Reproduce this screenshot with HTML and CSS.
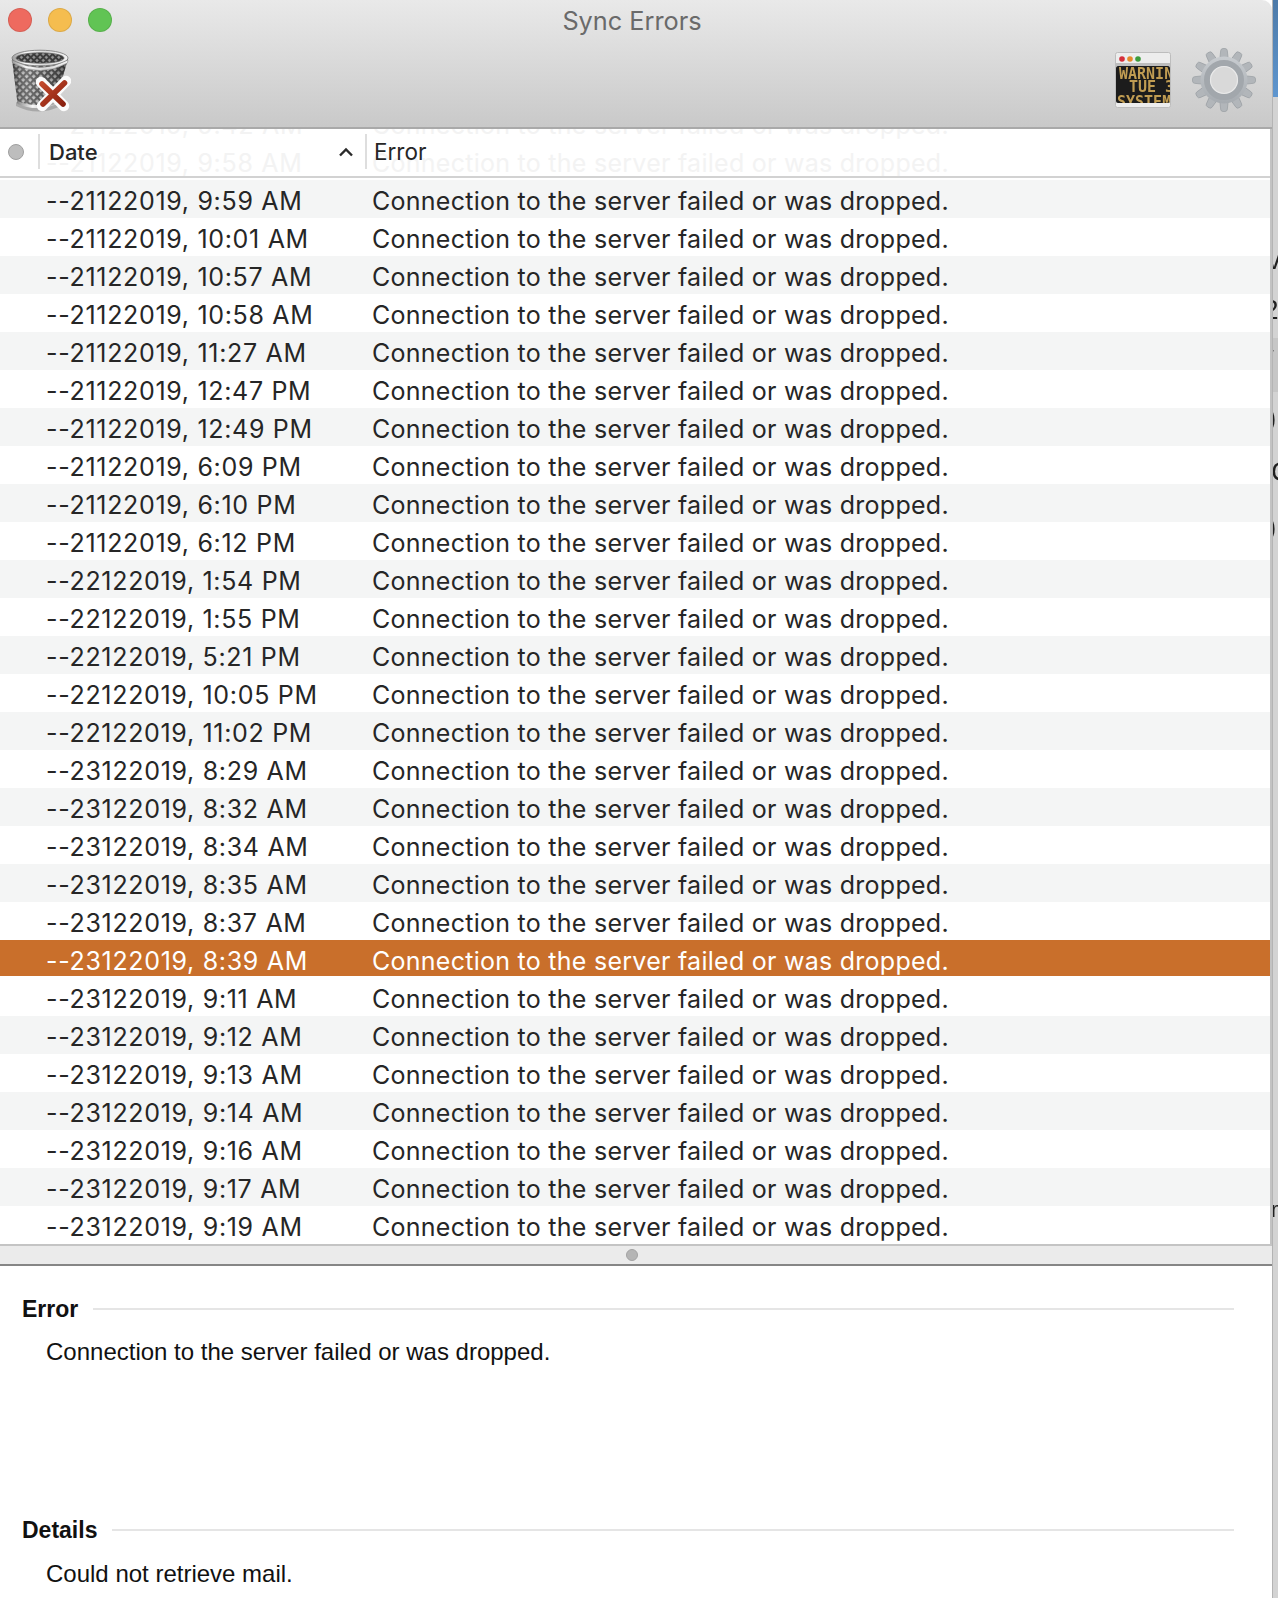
FILE: index.html
```html
<!DOCTYPE html>
<html lang="en">
<head>
<meta charset="utf-8">
<title>Sync Errors</title>
<link rel="stylesheet" href="styles.css">
</head>
<body>
<div class="screen">
  <main class="window">
    <header class="toolbar">
      <div class="titlebar">
        <div class="lights"><span class="light red"></span><span class="light yellow"></span><span class="light green"></span></div>
        <div class="title">Sync Errors</div>
      </div>
      <div class="tools">
        <svg class="trash" width="62" height="64" viewBox="0 0 62 64">
          <defs>
            <pattern id="mesh" width="5" height="5" patternUnits="userSpaceOnUse" patternTransform="rotate(45)">
              <rect width="5" height="5" fill="#555"/>
              <rect x="1.200" y="1.200" width="2.800" height="2.800" fill="#c2c2c2"/>
            </pattern>
            <pattern id="meshin" width="4.400" height="4.400" patternUnits="userSpaceOnUse" patternTransform="rotate(45)">
              <rect width="4.400" height="4.400" fill="#3a3a3a"/>
              <rect x="1" y="1" width="2.400" height="2.400" fill="#9a9a9a"/>
            </pattern>
            <linearGradient id="side" x1="0" x2="1" y1="0" y2="0">
              <stop offset="0" stop-color="#000" stop-opacity=".4"/>
              <stop offset=".3" stop-color="#fff" stop-opacity=".15"/>
              <stop offset=".7" stop-color="#000" stop-opacity=".1"/>
              <stop offset="1" stop-color="#000" stop-opacity=".45"/>
            </linearGradient>
            <linearGradient id="rim" x1="0" x2="1" y1="0" y2="0">
              <stop offset="0" stop-color="#9a9a9a"/>
              <stop offset=".25" stop-color="#f8f8f8"/>
              <stop offset=".6" stop-color="#d8d8d8"/>
              <stop offset="1" stop-color="#f4f4f4"/>
            </linearGradient>
            <linearGradient id="base" x1="0" x2="1" y1="0" y2="0">
              <stop offset="0" stop-color="#8b8b8b"/>
              <stop offset=".4" stop-color="#f6f6f6"/>
              <stop offset="1" stop-color="#a0a0a0"/>
            </linearGradient>
            <linearGradient id="xred" x1="0" x2="1" y1="0" y2="1">
              <stop offset="0" stop-color="#c2492c"/>
              <stop offset="1" stop-color="#8a200e"/>
            </linearGradient>
          </defs>
          <path class="shadow" d="M7 54 Q29 66 52 54 L52 58 Q29 69 7 58Z"/>
          <path d="M3 11 L8.500 55 Q27 63 46 55 L59 11Z" fill="url(#mesh)"/>
          <path d="M3 11 L8.500 55 Q27 63 46 55 L59 11Z" fill="url(#side)"/>
          <path d="M8.500 53 Q27 61 46 53 L46 56 Q27 64 8.500 56Z" fill="url(#base)"/>
          <ellipse cx="31" cy="10" rx="28" ry="7.800" fill="url(#rim)" stroke="#777" stroke-width=".8"/>
          <ellipse cx="31" cy="10" rx="24" ry="5.200" fill="url(#meshin)" stroke="#5c5c5c" stroke-width=".8"/>
          <path d="M3 12 Q31 27 59 12 L58.500 15 Q31 30 3.500 15Z" fill="url(#rim)" stroke="#808080" stroke-width=".5"/>
          <path d="M32 34 L55 58 M57 33 L33 58" class="x-white"/>
          <path d="M33 36 L54 56 M55.500 35 L34 56" class="x-red"/>
        </svg>
        <div class="tools-right">
          <svg class="console" width="56" height="56" viewBox="0 0 56 56">
            <defs><clipPath id="screenclip"><rect x="1" y="14" width="54" height="37" rx="2"/></clipPath></defs>
            <rect x=".5" y=".5" width="55" height="55" rx="2" fill="#ededed" stroke="#bdbdbd"/>
            <rect x="1" y="11" width="54" height="3" fill="#bdbdbd"/>
            <circle cx="7" cy="7" r="2.800" fill="#d5303c"/>
            <circle cx="15" cy="7" r="2.800" fill="#e58a2c"/>
            <circle cx="23" cy="7" r="2.800" fill="#3c9c3c"/>
            <rect x="1" y="14" width="54" height="37" rx="2" fill="#1c1c1c"/>
            <g clip-path="url(#screenclip)" class="console-text">
              <text x="4" y="27">WARNIN</text>
              <text x="14" y="40">TUE 3.</text>
              <text x="2" y="55">SYSTEM</text>
            </g>
          </svg>
          <svg class="gear" width="66" height="66" viewBox="-33 -33 66 66">
            <defs>
              <path id="tooth" d="M-4.500 -18 L-3.300 -29.500 Q-3 -31.500 -1 -31.500 L1 -31.500 Q3 -31.500 3.300 -29.500 L4.500 -18Z"/>
              <linearGradient id="gearfill" x1="0" x2="0" y1="0" y2="1"><stop offset="0" stop-color="#c8ccd0"/><stop offset="1" stop-color="#a6abb0"/></linearGradient>
            </defs>
            <g fill="#b2b6ba" stroke="#989da2" stroke-width=".7">
              <use href="#tooth"/><use href="#tooth" transform="rotate(30)"/><use href="#tooth" transform="rotate(60)"/>
              <use href="#tooth" transform="rotate(90)"/><use href="#tooth" transform="rotate(120)"/><use href="#tooth" transform="rotate(150)"/>
              <use href="#tooth" transform="rotate(180)"/><use href="#tooth" transform="rotate(210)"/><use href="#tooth" transform="rotate(240)"/>
              <use href="#tooth" transform="rotate(270)"/><use href="#tooth" transform="rotate(300)"/><use href="#tooth" transform="rotate(330)"/>
            </g>
            <circle r="23.500" fill="url(#gearfill)"/>
            <circle r="17" fill="none" stroke="#a2a7ac" stroke-width="6"/>
            <circle r="13.500" fill="#d9d9d9" stroke="#e9e9e9" stroke-width="1.200"/>
          </svg>
        </div>
      </div>
    </header>

    <section class="table">
      <div class="table-head">
        <div class="ghosts">
          <div class="row"><span class="date">--21122019, 9:42 AM</span><span class="error">Connection to the server failed or was dropped.</span></div>
          <div class="row"><span class="date">--21122019, 9:58 AM</span><span class="error">Connection to the server failed or was dropped.</span></div>
        </div>
        <div class="col col-dot"><span class="dot"></span></div>
        <div class="col col-date"><span class="date-label">Date</span>
          <svg class="chevron" width="16" height="10" viewBox="0 0 16 10"><path d="M2 8.500 L8 2.500 L14 8.500"/></svg>
        </div>
        <div class="col col-error">Error</div>
      </div>
      <div class="rows">
        <div class="row"><span class="date">--21122019, 9:59 AM</span><span class="error">Connection to the server failed or was dropped.</span></div>
        <div class="row"><span class="date">--21122019, 10:01 AM</span><span class="error">Connection to the server failed or was dropped.</span></div>
        <div class="row"><span class="date">--21122019, 10:57 AM</span><span class="error">Connection to the server failed or was dropped.</span></div>
        <div class="row"><span class="date">--21122019, 10:58 AM</span><span class="error">Connection to the server failed or was dropped.</span></div>
        <div class="row"><span class="date">--21122019, 11:27 AM</span><span class="error">Connection to the server failed or was dropped.</span></div>
        <div class="row"><span class="date">--21122019, 12:47 PM</span><span class="error">Connection to the server failed or was dropped.</span></div>
        <div class="row"><span class="date">--21122019, 12:49 PM</span><span class="error">Connection to the server failed or was dropped.</span></div>
        <div class="row"><span class="date">--21122019, 6:09 PM</span><span class="error">Connection to the server failed or was dropped.</span></div>
        <div class="row"><span class="date">--21122019, 6:10 PM</span><span class="error">Connection to the server failed or was dropped.</span></div>
        <div class="row"><span class="date">--21122019, 6:12 PM</span><span class="error">Connection to the server failed or was dropped.</span></div>
        <div class="row"><span class="date">--22122019, 1:54 PM</span><span class="error">Connection to the server failed or was dropped.</span></div>
        <div class="row"><span class="date">--22122019, 1:55 PM</span><span class="error">Connection to the server failed or was dropped.</span></div>
        <div class="row"><span class="date">--22122019, 5:21 PM</span><span class="error">Connection to the server failed or was dropped.</span></div>
        <div class="row"><span class="date">--22122019, 10:05 PM</span><span class="error">Connection to the server failed or was dropped.</span></div>
        <div class="row"><span class="date">--22122019, 11:02 PM</span><span class="error">Connection to the server failed or was dropped.</span></div>
        <div class="row"><span class="date">--23122019, 8:29 AM</span><span class="error">Connection to the server failed or was dropped.</span></div>
        <div class="row"><span class="date">--23122019, 8:32 AM</span><span class="error">Connection to the server failed or was dropped.</span></div>
        <div class="row"><span class="date">--23122019, 8:34 AM</span><span class="error">Connection to the server failed or was dropped.</span></div>
        <div class="row"><span class="date">--23122019, 8:35 AM</span><span class="error">Connection to the server failed or was dropped.</span></div>
        <div class="row"><span class="date">--23122019, 8:37 AM</span><span class="error">Connection to the server failed or was dropped.</span></div>
        <div class="row selected"><span class="date">--23122019, 8:39 AM</span><span class="error">Connection to the server failed or was dropped.</span></div>
        <div class="row"><span class="date">--23122019, 9:11 AM</span><span class="error">Connection to the server failed or was dropped.</span></div>
        <div class="row"><span class="date">--23122019, 9:12 AM</span><span class="error">Connection to the server failed or was dropped.</span></div>
        <div class="row"><span class="date">--23122019, 9:13 AM</span><span class="error">Connection to the server failed or was dropped.</span></div>
        <div class="row"><span class="date">--23122019, 9:14 AM</span><span class="error">Connection to the server failed or was dropped.</span></div>
        <div class="row"><span class="date">--23122019, 9:16 AM</span><span class="error">Connection to the server failed or was dropped.</span></div>
        <div class="row"><span class="date">--23122019, 9:17 AM</span><span class="error">Connection to the server failed or was dropped.</span></div>
        <div class="row"><span class="date">--23122019, 9:19 AM</span><span class="error">Connection to the server failed or was dropped.</span></div>
      </div>
    </section>

    <div class="splitter"><span class="handle"></span></div>

    <section class="details">
      <div class="block block-error">
        <div class="heading"><span>Error</span><i class="rule"></i></div>
        <p class="body-text">Connection to the server failed or was dropped.</p>
      </div>
      <div class="block">
        <div class="heading"><span>Details</span><i class="rule"></i></div>
        <p class="body-text body-last">Could not retrieve mail.</p>
      </div>
    </section>
  </main>

  <aside class="backdrop">
    <div class="desk-blue"></div>
    <span class="desk-band"></span>
    <span class="frag frag-1">v</span>
    <span class="frag frag-2">2</span>
    <span class="frag frag-3">/</span>
    <span class="frag frag-4">)</span>
    <span class="frag frag-5">C</span>
    <span class="frag frag-6">)</span>
    <span class="frag frag-7">r</span>
  </aside>
</div>
</body>
</html>
```

FILE: styles.css
```css
* { box-sizing: border-box; }

html, body { margin: 0; padding: 0; background: #fff; }

body { width: 1278px; height: 1598px; overflow: hidden; }

.screen {
  display: flex;
  width: 1278px;
  height: 1598px;
  font-family: "Inter", "Liberation Sans", sans-serif;
  color: #262626;
}

.window {
  width: 1272px;
  flex: none;
  display: flex;
  flex-direction: column;
  background: #fff;
  border-top-right-radius: 10px;
  overflow: hidden;
}

/* toolbar */
.toolbar {
  height: 129px;
  flex: none;
  background: linear-gradient(#e9e9e9, #c9c9c9);
  border-bottom: 2px solid #a9a9a9;
}

.titlebar {
  height: 40px;
  display: grid;
  grid-template-columns: 124px 1fr 124px;
  align-items: center;
  padding-right: 8px;
}

.lights { display: flex; gap: 16px; padding-left: 8px; }

.light { width: 24px; height: 24px; border-radius: 50%; border: 1px solid rgba(0,0,0,.1); }
.red { background: #ee6a5f; }
.yellow { background: #f5bd4f; }
.green { background: #61c454; }

.title {
  padding-top: 1px;
  text-align: center;
  font-size: 25.300px;
  color: #6a6a6a;
  font-family: "Inter", sans-serif;
}

.tools {
  height: 80px;
  display: flex;
  justify-content: space-between;
  align-items: center;
  padding: 0 15px 0 9px;
}

.tools-right { display: flex; align-items: center; gap: 20px; }

.shadow { fill: #000; opacity: .18; }

.x-white { fill: none; stroke: #fbfbfb; stroke-width: 10.500; stroke-linecap: round; }
.x-red { fill: none; stroke: url(#xred); stroke-width: 5.600; stroke-linecap: round; }

.console-text {
  font-family: "DejaVu Sans Mono", monospace;
  font-weight: 700;
  font-size: 15px;
  fill: #c09c52;
  filter: blur(.4px);
}

/* table */
.table {
  flex: none;
  height: 1115px;
  border-right: 2px solid #c3c3c3;
}

.table-head {
  position: relative;
  height: 49px;
  display: flex;
  align-items: center;
  background: #fff;
  border-bottom: 2px solid #d2d2d2;
  overflow: hidden;
  font-size: 22.500px;
  color: #262626;
  padding-bottom: 2px;
}

.ghosts {
  position: absolute;
  left: 0;
  right: 0;
  top: -25px;
  color: #f3f3f3;
}

.ghosts .row { background: transparent; }

.col {
  position: relative;
  height: 35px;
  display: flex;
  align-items: center;
}

.col-dot { width: 38px; justify-content: flex-start; padding-left: 8px; }

.dot {
  width: 16px;
  height: 16px;
  border-radius: 50%;
  background: #bdbdbd;
  border: 1px solid #9f9f9f;
}

.col-date {
  width: 327px;
  padding-left: 9px;
  border-left: 2px solid #dedede;
  justify-content: space-between;
  padding-right: 11px;
}

.date-label { font-weight: 500; font-size: 22px; }

.chevron { fill: none; stroke: #2a2a2a; stroke-width: 2.400; }

.col-error { padding-left: 7px; border-left: 2px solid #dedede; }

.rows { margin-top: 2px; }

.row {
  display: flex;
  height: 38px;
  padding: 4px 0 0 46px;
  align-items: center;
  font-size: 25px;
  white-space: nowrap;
}

.rows .row:nth-child(odd) { background: #f4f5f5; }

.rows .row.selected {
  background: linear-gradient(#c96f2b 36px, #fff 36px);
  color: #fff;
}

.date { width: 326px; flex: none; letter-spacing: .68px; }

.error { letter-spacing: .265px; }

/* splitter */
.splitter {
  flex: none;
  height: 22px;
  display: flex;
  align-items: center;
  justify-content: center;
  padding-right: 8px;
  background: #ebebeb;
  border-top: 2px solid #c4c4c4;
  border-bottom: 2px solid #868686;
}

.handle {
  width: 12px;
  height: 12px;
  border-radius: 50%;
  background: #b5b5b5;
  border: 1px solid #a3a3a3;
}

/* details */
.details {
  flex: 1;
  padding: 28px 38px 0 22px;
  font-family: "Liberation Sans", Arial, sans-serif;
  color: #111;
}

.block-error { height: 221px; }

.heading {
  display: flex;
  align-items: center;
  gap: 15px;
  height: 30px;
  font-weight: 700;
  font-size: 23px;
}

.rule { flex: 1; height: 2px; background: #e5e5e5; }

.body-text {
  margin: 13px 0 0 24px;
  font-size: 24px;
  line-height: 30px;
}

.body-last { margin-top: 14px; }

/* desktop strip behind the window */
.backdrop {
  position: relative;
  flex: 1;
  overflow: hidden;
  background: #d3d3d3;
  border-left: 1px solid #b4b4b4;
}

.desk-blue {
  height: 97px;
  margin-left: -1px;
  background: linear-gradient(#4d7aa8, #5f96cf);
}

.desk-band {
  position: absolute;
  left: 0;
  right: 0;
  top: 338px;
  height: 54px;
  background: #c6c6c6;
}

.frag {
  position: absolute;
  left: -2px;
  font-family: "Liberation Sans", sans-serif;
  font-size: 28px;
  line-height: 30px;
  color: #1d1d1d;
  opacity: .98;
}

.frag-1 { top: 245px; left: -6px; }
.frag-2 { top: 295px; left: -10px; }
.frag-3 { top: 343px; left: -5px; font-size: 20px; }
.frag-4 { top: 403px; left: -6px; }
.frag-5 { top: 457px; }
.frag-6 { top: 512px; left: -6px; }
.frag-7 { top: 1195px; left: -2px; font-size: 22px; }
```
